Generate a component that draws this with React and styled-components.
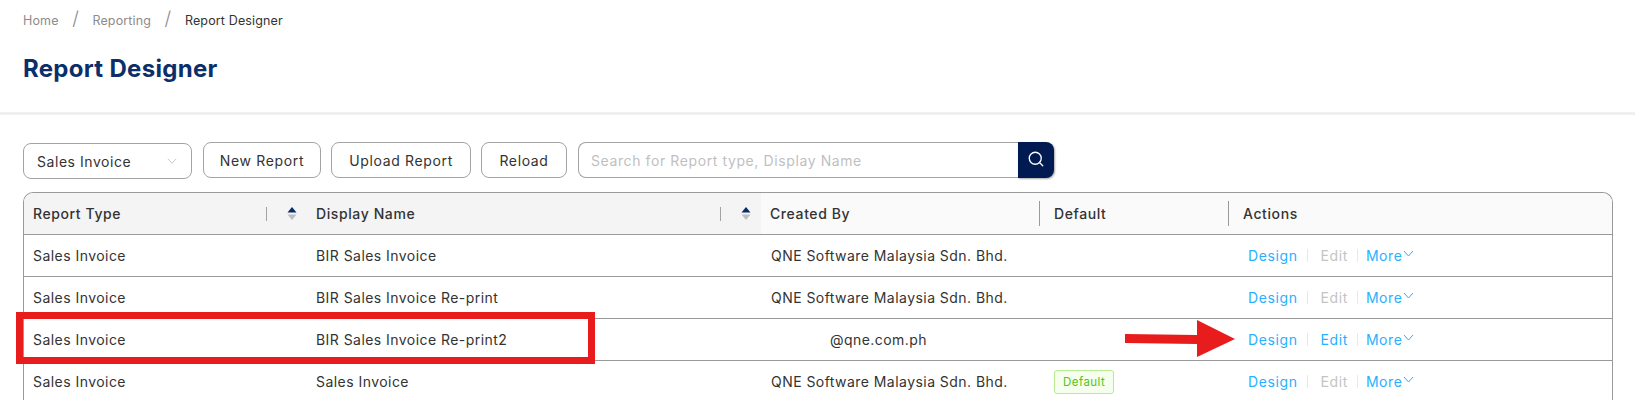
import styled, { createGlobalStyle } from "styled-components";
import { Search } from "lucide-react";

const GlobalStyle = createGlobalStyle`
  html, body {
    margin: 0;
    padding: 0;
    background: #fff;
    overflow: hidden;
  }
  body {
    font-family: Inter, "Noto Sans", sans-serif;
    font-size: 14px;
    color: #333;
  }
`;

const COLUMNS = "283px 454px 278px 189px 1fr";

const rows = [
  { type: "Sales Invoice", name: "BIR Sales Invoice", by: "QNE Software Malaysia Sdn. Bhd." },
  { type: "Sales Invoice", name: "BIR Sales Invoice Re-print", by: "QNE Software Malaysia Sdn. Bhd." },
  { type: "Sales Invoice", name: "BIR Sales Invoice Re-print2", by: "@qne.com.ph", indent: true, editable: true },
  { type: "Sales Invoice", name: "Sales Invoice", by: "QNE Software Malaysia Sdn. Bhd.", isDefault: true },
];

const SortIcon = () => (
  <SortSvg width="10" height="15" viewBox="0 0 10 15">
    <path d="M5 1 L9.5 6.5 L0.5 6.5 Z" fill="#0b2a66" />
    <path d="M5 14 L9.5 8.5 L0.5 8.5 Z" fill="#bdbdbd" />
  </SortSvg>
);

const Chevron = ({ color = "#29b0ff", size = 11 }) => (
  <svg width={size} height={size} viewBox="0 0 11 11" fill="none">
    <path d="M1 3 L5.5 8 L10 3" stroke={color} strokeWidth="1" />
  </svg>
);

const App = () => {
  return (
    <Page>
      <GlobalStyle />
      <Header>
        <Breadcrumb>
          <Crumb>Home</Crumb>
          <Slash>/</Slash>
          <Crumb>Reporting</Crumb>
          <Slash>/</Slash>
          <Crumb $current>Report Designer</Crumb>
        </Breadcrumb>
        <Title>Report Designer</Title>
      </Header>

      <Content>
        <Toolbar>
          <Select>
            Sales Invoice
            <Chevron color="#c4c4c4" size={10} />
          </Select>
          <Button $width={118}>New Report</Button>
          <Button $width={140}>Upload Report</Button>
          <Button $width={86}>Reload</Button>
          <SearchBox>
            <SearchInput>Search for Report type, Display Name</SearchInput>
            <SearchButton>
              <Search size={18} color="#fff" strokeWidth={1.75} />
            </SearchButton>
          </SearchBox>
        </Toolbar>

        <Table>
          <HeadRow>
            <HeadCell $sorted>
              Report Type
              <SortTools>
                <Divider />
                <SortIcon />
              </SortTools>
            </HeadCell>
            <HeadCell $sorted>
              Display Name
              <SortTools>
                <Divider />
                <SortIcon />
              </SortTools>
            </HeadCell>
            <HeadCell>Created By</HeadCell>
            <HeadCell $line>Default</HeadCell>
            <HeadCell $line>Actions</HeadCell>
          </HeadRow>

          {rows.map((row, i) => (
            <Row key={`row-${i}`}>
              <Cell>{row.type}</Cell>
              <Cell>{row.name}</Cell>
              <Cell $pad={row.indent ? 69 : 10}>{row.by}</Cell>
              <Cell>{row.isDefault && <Badge>Default</Badge>}</Cell>
              <ActionCell>
                <ActionLink>Design</ActionLink>
                <ActionSep $after={13} />
                <ActionLink $disabled={!row.editable}>Edit</ActionLink>
                <ActionSep $after={8} />
                <ActionLink>
                  More
                  <Chevron />
                </ActionLink>
              </ActionCell>
            </Row>
          ))}

          <Highlight />
          <Arrow width="110" height="37" viewBox="0 0 110 37">
            <path d="M0 14 L72 15 L72 0 L110 19 L72 37 L72 24 L0 23 Z" fill="#e81c1c" />
          </Arrow>
        </Table>
      </Content>
    </Page>
  );
};

const Page = styled.div`
  height: 400px;
  overflow: hidden;
`;

const Header = styled.header`
  height: 100px;
  padding: 12px 23px 0;
  border-bottom: 3px solid #f0f0f0;
`;

const Breadcrumb = styled.nav`
  display: flex;
  align-items: center;
  height: 16px;
  font-size: 12.5px;
  letter-spacing: 0.15px;
`;

const Crumb = styled.span`
  color: ${(p) => (p.$current ? "#333" : "#8c8c8c")};
`;

const Slash = styled.span`
  color: #8c8c8c;
  font-size: 19px;
  font-weight: 300;
  margin: 0 13.5px;
  position: relative;
  top: -2px;
`;

const Title = styled.h1`
  margin: 25px 0 0;
  font-size: 24px;
  line-height: 32px;
  font-weight: 700;
  letter-spacing: 0.3px;
  color: #0b2f6b;
`;

const Content = styled.main`
  padding: 27px 22px 0 23px;
`;

const Toolbar = styled.div`
  display: flex;
  align-items: flex-start;
  height: 37px;
  margin-bottom: 13px;
`;

const Select = styled.div`
  width: 169px;
  height: 36px;
  margin-top: 1px;
  box-sizing: border-box;
  border: 1px solid #a3a3a3;
  border-radius: 8px;
  padding: 0 14px 0 13px;
  display: flex;
  align-items: center;
  justify-content: space-between;
  letter-spacing: 0.55px;
  margin-right: 11px;
`;

const Button = styled.button`
  width: ${(p) => p.$width}px;
  height: 36px;
  box-sizing: border-box;
  border: 1px solid #a3a3a3;
  border-radius: 8px;
  background: #fff;
  color: #333;
  font: inherit;
  letter-spacing: 0.65px;
  padding: 0;
  margin-right: 10px;
`;

const SearchBox = styled.div`
  display: flex;
  height: 36px;
  margin-left: 1px;
`;

const SearchInput = styled.div`
  width: 440px;
  box-sizing: border-box;
  border: 1px solid #a3a3a3;
  border-right: none;
  border-radius: 8px 0 0 8px;
  padding: 0 12px;
  display: flex;
  align-items: center;
  color: #bfbfbf;
  letter-spacing: 0.6px;
`;

const SearchButton = styled.div`
  width: 36px;
  background: #021a52;
  border-radius: 0 8px 8px 0;
  box-shadow: 1px 1px 2px rgba(0, 0, 0, 0.35);
  display: flex;
  align-items: center;
  justify-content: center;

  svg {
    position: relative;
    top: -1px;
  }
`;

const Table = styled.div`
  position: relative;
  border: 1px solid #9a9a9a;
  border-bottom: none;
  border-radius: 10px 10px 0 0;
`;

const HeadRow = styled.div`
  display: grid;
  grid-template-columns: ${COLUMNS};
  height: 41px;
  border-bottom: 1px solid #9a9a9a;
  background: #fafafa;
  border-radius: 10px 10px 0 0;
  overflow: hidden;
`;

const HeadCell = styled.div`
  position: relative;
  display: flex;
  align-items: center;
  padding-left: ${(p) => (p.$line ? 15 : 9)}px;
  font-weight: 500;
  letter-spacing: 0.6px;
  color: #333;
  background: ${(p) => (p.$sorted ? "#f4f4f4" : "transparent")};

  ${(p) =>
    p.$line &&
    `
    &::before {
      content: "";
      position: absolute;
      left: 0;
      top: 8px;
      bottom: 8px;
      width: 1px;
      background: #9a9a9a;
    }
  `}
`;

const SortTools = styled.div`
  position: absolute;
  right: 10px;
  top: 0;
  bottom: 0;
  display: flex;
  align-items: center;
  gap: 20px;
`;

const Divider = styled.span`
  width: 1px;
  height: 14px;
  background: #a3a3a3;
`;

const SortSvg = styled.svg`
  display: block;
`;

const Row = styled.div`
  display: grid;
  grid-template-columns: ${COLUMNS};
  align-items: center;
  height: 41px;
  border-bottom: 1px solid #9a9a9a;
`;

const Cell = styled.div`
  display: flex;
  align-items: center;
  padding-left: ${(p) => p.$pad ?? 9}px;
  letter-spacing: 0.45px;
`;

const ActionCell = styled.div`
  display: flex;
  align-items: center;
  padding-left: 20px;
`;

const ActionLink = styled.span`
  display: inline-flex;
  align-items: center;
  color: ${(p) => (p.$disabled ? "#c4c4c4" : "#29b0ff")};
  letter-spacing: 0.6px;

  svg {
    position: relative;
    top: -2px;
  }
`;

const ActionSep = styled.span`
  width: 1px;
  height: 13px;
  background: #e8e8e8;
  margin: 0 ${(p) => p.$after}px 0 9px;
`;

const Badge = styled.span`
  margin-left: 6px;
  padding: 0 8px;
  height: 24px;
  box-sizing: border-box;
  display: inline-flex;
  align-items: center;
  font-size: 11.5px;
  color: #52c41a;
  background: #f6ffed;
  border: 1px solid #b7eb8f;
  border-radius: 3px;
`;

const Highlight = styled.div`
  position: absolute;
  left: -8px;
  top: 119px;
  width: 579px;
  height: 52px;
  box-sizing: border-box;
  border: 7px solid #e81c1c;
  pointer-events: none;
`;

const Arrow = styled.svg`
  position: absolute;
  left: 1101px;
  top: 127px;
  pointer-events: none;
`;

export default App;
